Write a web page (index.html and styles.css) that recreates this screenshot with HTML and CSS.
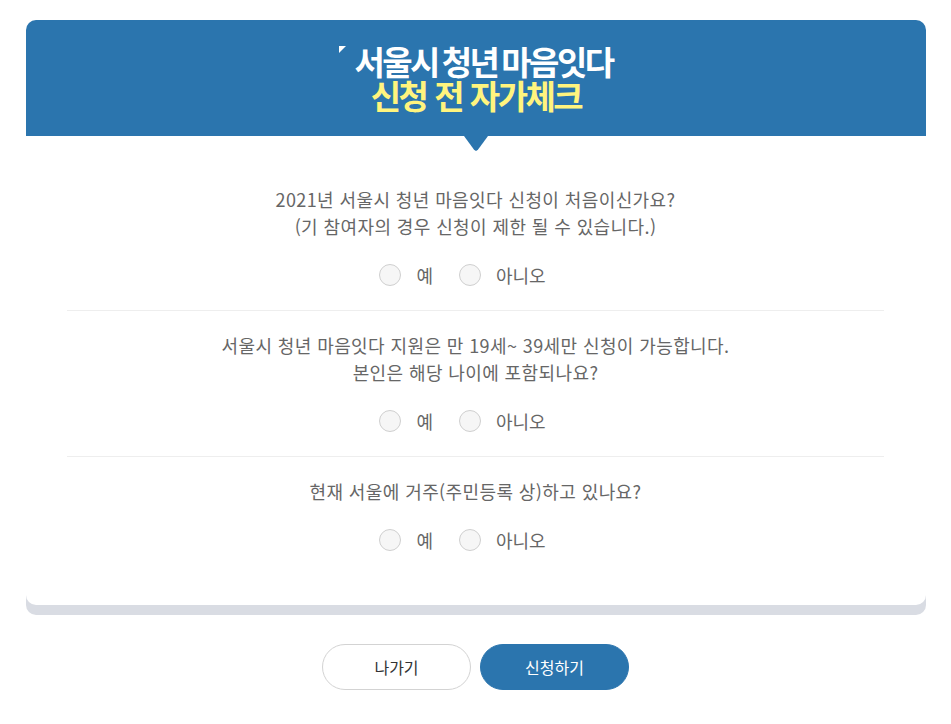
FILE: index.html
```html
<!DOCTYPE html>
<html lang="ko">
<head>
    <meta charset="UTF-8">
    <meta name="viewport" content="width=device-width, initial-scale=1.0">
    <title>서울시 청년 마음잇다 신청 전 자가체크</title>
    <link rel="stylesheet" href="styles.css">
</head>
<body>

    <div class="card">
        <div class="card-head">
            <h1 class="title">
                <span class="title-main"><span class="mark"></span>서울시 청년 마음잇다</span>
                <span class="title-sub">신청 전 자가체크</span>
            </h1>
            <span class="pointer"></span>
        </div>

        <div class="card-body">
            <div class="question">
                <p>2021년 서울시 청년 마음잇다 신청이 처음이신가요?<br>(기 참여자의 경우 신청이 제한 될 수 있습니다.)</p>
                <div class="options">
                    <label class="option"><input type="radio" name="q1"> 예</label>
                    <label class="option"><input type="radio" name="q1"> 아니오</label>
                </div>
            </div>

            <div class="question">
                <p>서울시 청년 마음잇다 지원은 만 19세~ 39세만 신청이 가능합니다.<br>본인은 해당 나이에 포함되나요?</p>
                <div class="options">
                    <label class="option"><input type="radio" name="q2"> 예</label>
                    <label class="option"><input type="radio" name="q2"> 아니오</label>
                </div>
            </div>

            <div class="question">
                <p>현재 서울에 거주(주민등록 상)하고 있나요?</p>
                <div class="options">
                    <label class="option"><input type="radio" name="q3"> 예</label>
                    <label class="option"><input type="radio" name="q3"> 아니오</label>
                </div>
            </div>
        </div>
    </div>

    <div class="actions">
        <input type="button" value="나가기" class="btn btn-out">
        <input type="button" value="신청하기" class="btn btn-apply">
    </div>

</body>
</html>
```

FILE: styles.css
```css
* {
    margin: 0;
    padding: 0;
    box-sizing: border-box;
}

body {
    font-family: "Noto Sans CJK KR", "Noto Sans", sans-serif;
    background-color: white;
    padding-top: 20px;
}

.card {
    width: 900px;
    margin-left: 26px;
    background-color: white;
    border-radius: 10px;
    box-shadow: 0 10px 0 #d9dce3;
}

.card-head {
    position: relative;
    height: 116px;
    display: flex;
    justify-content: center;
    align-items: center;
    background-color: #2b75ae;
    border-radius: 10px 10px 0 0;
}

.title {
    display: flex;
    flex-direction: column;
    align-items: center;
    font-size: 33px;
    font-weight: bold;
    line-height: 34px;
    letter-spacing: -2.5px;
}

.title-main {
    color: white;
    word-spacing: -3px;
}

.title-sub {
    color: #fff47e;
    word-spacing: 1px;
}

.mark {
    display: inline-block;
    width: 0;
    height: 0;
    border-top: 7px solid white;
    border-right: 7px solid transparent;
    vertical-align: top;
    margin-top: 2px;
    margin-right: 8px;
}

.pointer {
    position: absolute;
    left: 438px;
    bottom: -15px;
    width: 24px;
    height: 15px;
    background-color: #2b75ae;
    clip-path: polygon(0 0, 100% 0, 58% 92%, 50% 100%, 42% 92%);
}

.card-body {
    padding: 50px 42px 30px 41px;
}

.question {
    padding: 21px 0 24px;
    border-bottom: 1px solid #eeeeee;
    text-align: center;
}

.question:first-child {
    padding-top: 0;
}

.question:last-child {
    border-bottom: none;
}

.question p {
    font-size: 18px;
    line-height: 27px;
    letter-spacing: 0.4px;
    color: #666;
}

.options {
    display: flex;
    justify-content: center;
    margin-top: 24px;
}

.option {
    display: flex;
    align-items: center;
    gap: 15px;
    margin-right: 26px;
    font-size: 18px;
    line-height: 22px;
    color: #666;
}

.option input {
    appearance: none;
    width: 22px;
    height: 22px;
    border: 1px solid #cfcfcf;
    border-radius: 50%;
    background-color: #f6f6f6;
}

.actions {
    display: flex;
    justify-content: center;
    gap: 9px;
    margin-top: 39px;
}

.btn {
    width: 149px;
    height: 46px;
    border-radius: 23px;
    font-family: "Noto Sans CJK KR", "Noto Sans", sans-serif;
    font-size: 16px;
    cursor: pointer;
}

.btn-out {
    background-color: white;
    border: 1px solid #d3d3d3;
    color: #333;
}

.btn-apply {
    background-color: #2b75ae;
    border: 1px solid #2b75ae;
    color: white;
}
```
